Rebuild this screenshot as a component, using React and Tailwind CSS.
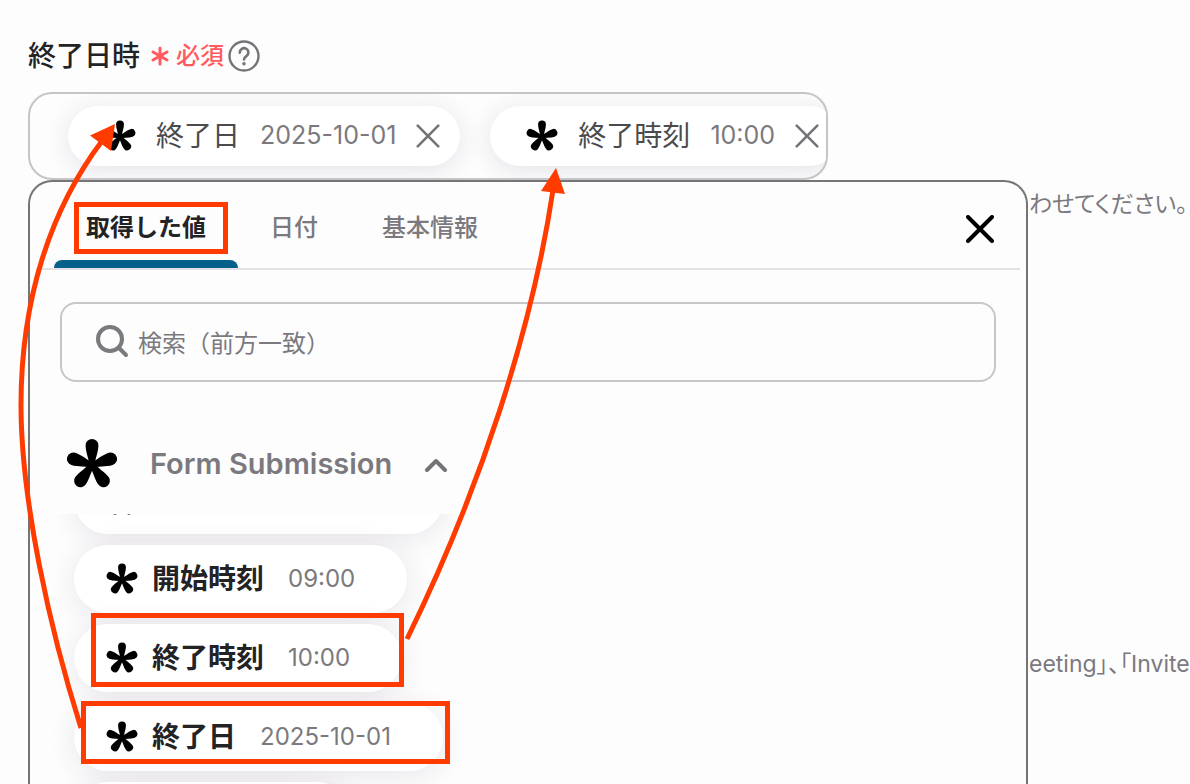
import { useState } from 'react';

const tabs = ['取得した値', '日付', '基本情報'];

const selected = [
  { name: '終了日', value: '2025-10-01' },
  { name: '終了時刻', value: '10:00' },
];

const options = [
  { name: '開始日', value: '2025-10-01' },
  { name: '開始時刻', value: '09:00' },
  { name: '終了時刻', value: '10:00' },
  { name: '終了日', value: '2025-10-01' },
  { name: '備考', value: '09:00' },
];

function FormIcon({ className }) {
  return (
    <svg viewBox="-26 -27 52 52" className={className} fill="#000" aria-hidden="true">
      {[0, 72, 144, 216, 288].map((deg) => (
        <path
          key={deg}
          transform={`rotate(${deg})`}
          d="M-2.4 2 C-2.6 -5 -6.4 -13 -6.4 -19.6 A6.4 6.4 0 0 1 6.4 -19.6 C6.4 -13 2.6 -5 2.4 2 Z"
        />
      ))}
    </svg>
  );
}

function CloseIcon({ className, strokeWidth }) {
  return (
    <svg viewBox="0 0 28 28" className={className} fill="none" stroke="currentColor" strokeWidth={strokeWidth} strokeLinecap="round" aria-hidden="true">
      <path d="M2 2 L26 26 M26 2 L2 26" />
    </svg>
  );
}

function SelectedChip({ name, value }) {
  return (
    <div className="flex h-[60px] shrink-0 items-center rounded-full bg-white pl-9 pr-5 shadow-[0_4px_24px_rgba(70,50,90,0.14)]">
      <FormIcon className="mr-5 size-8" />
      <span className="mr-5 text-[28px] text-[#4b4a4d]">{name}</span>
      <span className="mr-5 text-[25px] text-[#7b797d]">{value}</span>
      <button type="button" aria-label={`${name}を削除`} className="text-[#757377]">
        <CloseIcon className="size-6" strokeWidth={3} />
      </button>
    </div>
  );
}

function OptionChip({ name, value }) {
  return (
    <button type="button" className="flex h-[68px] shrink-0 items-center rounded-full bg-white pl-8 pr-13 shadow-[0_4px_28px_rgba(70,50,90,0.12)]">
      <FormIcon className="mr-3.5 size-8" />
      <span className="mr-6 text-[28px] font-bold text-[#232225]">{name}</span>
      <span className="text-2xl text-[#7b797d]">{value}</span>
    </button>
  );
}

function Annotations() {
  return (
    <svg className="pointer-events-none absolute left-0 top-0" width="1190" height="784" fill="none" stroke="#ff3b00" strokeWidth="5" aria-hidden="true">
      <rect x="76.5" y="204.5" width="149" height="47" />
      <rect x="93.5" y="615.5" width="308" height="69" />
      <rect x="83.5" y="703.5" width="364" height="58" />
      <path d="M81 728 C50 630 21 500 21 405 C21 300 50 210 102 141" />
      <path d="M407 639 C480 490 532 330 553 190" />
      <path d="M115 124 L90 135.5 L111 151 Z" fill="#ff3b00" stroke="none" />
      <path d="M556 168 L541 191 L565 194 Z" fill="#ff3b00" stroke="none" />
    </svg>
  );
}

export default function App() {
  const [active, setActive] = useState(0);
  const [query, setQuery] = useState('');

  return (
    <main className="relative flex h-screen flex-col overflow-hidden bg-[#fdfdfd] pl-7 pt-9 font-['Inter','Noto_Sans_CJK_JP',sans-serif]">
      <div className="flex h-10 items-center">
        <h1 className="text-[28px] font-medium text-[#232225]">終了日時</h1>
        <svg viewBox="0 0 20 20" className="ml-2.5 mr-1.5 size-5" fill="none" stroke="#ff5a60" strokeWidth="3" strokeLinecap="round" aria-hidden="true">
          <path d="M10 2 V18 M3 6 L17 14 M17 6 L3 14" />
        </svg>
        <span className="text-2xl font-medium text-[#ff5a60]">必須</span>
        <button type="button" aria-label="ヘルプ" className="ml-1">
          <svg viewBox="0 0 32 32" className="size-8" fill="none" stroke="#757377" strokeLinecap="round" aria-hidden="true">
            <circle cx="16" cy="16" r="14.5" strokeWidth="2.4" />
            <path d="M11.8 12.6 a4.3 4.3 0 1 1 6.6 3.5 c-1.6 1 -2.4 1.7 -2.4 3.4" strokeWidth="2.6" />
            <circle cx="16" cy="23.8" r="1.8" fill="#757377" stroke="none" />
          </svg>
        </button>
      </div>

      <div className="mt-4 flex w-full max-w-[800px] gap-7.5 overflow-hidden rounded-3xl border-2 border-[#c6c4c8] py-3 pl-9.5">
        {selected.map((item) => (
          <SelectedChip key={item.name} {...item} />
        ))}
      </div>

      <div className="flex min-h-0 flex-1">
        <section className="flex min-w-0 flex-1 flex-col rounded-t-3xl border-2 border-b-0 border-[#757575]">
          <div className="mx-1.5 flex h-22 shrink-0 items-stretch border-b-2 border-[#e4e2e6] pl-4.5">
            <div role="tablist" className="flex">
              {tabs.map((tab, i) => (
                <button
                  key={tab}
                  type="button"
                  role="tab"
                  aria-selected={i === active}
                  onClick={() => setActive(i)}
                  className={`flex flex-col items-center text-2xl ${i === active ? 'font-bold text-[#232225]' : 'font-medium text-[#7b797d]'}`}
                >
                  <span className="flex flex-1 items-center px-8 pt-3.5">{tab}</span>
                  <span className={`h-2 w-full rounded-t-lg ${i === active ? 'bg-[#056189]' : ''}`} />
                </button>
              ))}
            </div>
            <button type="button" aria-label="閉じる" className="ml-auto mr-6.5 mt-2 text-black">
              <CloseIcon className="size-7" strokeWidth={4} />
            </button>
          </div>

          <label className="mx-7.5 mt-8 flex h-20 shrink-0 items-center gap-2 rounded-2xl border-2 border-[#c8c6ca] px-8">
            <svg viewBox="0 0 36 36" className="size-9 shrink-0" fill="none" stroke="#7b797d" strokeWidth="4" strokeLinecap="round" aria-hidden="true">
              <circle cx="16" cy="15" r="12" />
              <path d="M25 24 L32 31" />
            </svg>
            <input
              type="text"
              aria-label="検索"
              placeholder="検索（前方一致）"
              value={query}
              onChange={(e) => setQuery(e.target.value)}
              className="min-w-0 flex-1 bg-transparent pt-1 text-2xl outline-none placeholder:text-[#7b797d]"
            />
          </label>

          <button type="button" aria-expanded="true" className="ml-9 mt-14 flex h-13 shrink-0 items-center self-start">
            <FormIcon className="mr-8 size-13" />
            <span className="text-[29px] font-semibold text-[#7b797d]">Form Submission</span>
            <svg viewBox="0 0 24 14" className="ml-8 mt-0.5 h-3.5 w-6" fill="none" stroke="#757377" strokeWidth="4" strokeLinecap="round" strokeLinejoin="round" aria-hidden="true">
              <path d="M3 12 L12 3 L21 12" />
            </svg>
          </button>

          <div className="mt-6 min-h-0 flex-1 overflow-hidden pl-11">
            <div className="-mt-12 flex flex-col items-start gap-[11px]">
              {options.map((item) => (
                <OptionChip key={item.name} {...item} />
              ))}
            </div>
          </div>
        </section>

        <aside className="flex w-[162px] shrink-0 flex-col gap-[428px] overflow-hidden whitespace-nowrap pl-px pt-2 text-[23px] leading-8 text-[#7b797d] [font-feature-settings:'palt']">
          <p>わせてください。</p>
          <p>eeting」、「Invite</p>
        </aside>
      </div>

      <Annotations />
    </main>
  );
}
